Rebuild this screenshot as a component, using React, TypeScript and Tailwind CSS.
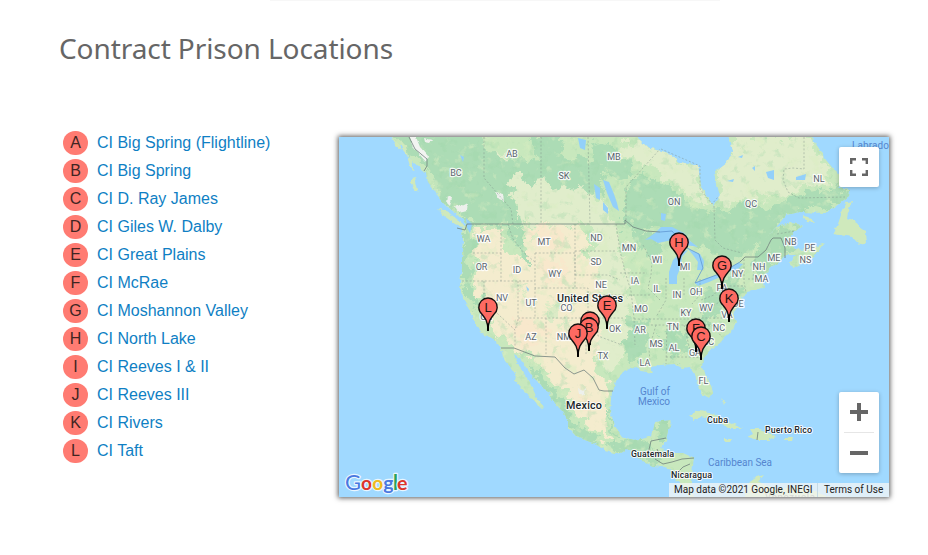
import React from "react";

const locations = [
    "CI Big Spring (Flightline)",
    "CI Big Spring",
    "CI D. Ray James",
    "CI Giles W. Dalby",
    "CI Great Plains",
    "CI McRae",
    "CI Moshannon Valley",
    "CI North Lake",
    "CI Reeves I & II",
    "CI Reeves III",
    "CI Rivers",
    "CI Taft",
];

// x / y is the centre of the pin's head
// A and I share a spot with B and J, so only the top pin is drawn
const pins = [
    { id: "H", x: 679, y: 242 },
    { id: "G", x: 722, y: 265 },
    { id: "K", x: 729, y: 298 },
    { id: "E", x: 607, y: 305 },
    { id: "L", x: 488, y: 307 },
    { id: "D", x: 590, y: 321 },
    { id: "B", x: 589, y: 327 },
    { id: "F", x: 696, y: 328 },
    { id: "J", x: 578, y: 333 },
    { id: "C", x: 701, y: 336 },
];

const states: [string, number, number][] = [
    ["AB", 512, 154], ["BC", 456, 173], ["SK", 564, 176], ["MB", 614, 157], ["ON", 674, 202],
    ["QC", 751, 204], ["NL", 819, 179], ["NB", 790.5, 242], ["PE", 810, 248], ["NS", 805.5, 260],
    ["ME", 774, 258], ["NH", 759, 267], ["MA", 761.5, 279], ["NY", 737.5, 274], ["WA", 483.5, 239],
    ["MT", 544, 242], ["ND", 596.5, 238], ["MN", 629, 248], ["OR", 481.5, 267], ["ID", 517, 270],
    ["WY", 555, 274], ["SD", 596, 262], ["WI", 657, 260], ["MI", 685, 267], ["NE", 601, 285],
    ["IA", 635, 281], ["IL", 657, 289], ["IN", 677, 295], ["OH", 696, 292], ["WV", 706, 308],
    ["KY", 686, 313], ["NV", 502, 298], ["UT", 531, 303], ["CO", 566.5, 308], ["MO", 641, 309],
    ["CA", 486, 317], ["AZ", 531, 337], ["NM", 564, 337], ["OK", 615, 329], ["AR", 640, 330],
    ["TN", 673, 327], ["MS", 656, 344], ["AL", 674, 348], ["GA", 695, 353], ["SC", 708.5, 342],
    ["NC", 719, 328], ["VA", 727, 315], ["PA", 722, 288], ["DE", 738, 304], ["LA", 645, 363],
    ["TX", 603, 356], ["FL", 703.5, 381],
];

const mainland =
    "M388 130L394 141L401 146L407 154L413 162L421 169L426 173L428 182L434 190L438 197L446 206L456 213L464 220L468 224L462 228L463 240L462 252L462 268L460 283L461 292L465 303L470 311L473 320L479 328L482 334L492 338L498 344L501 350L505 361L512 369L516 375L515 381L521 388L529 395L535 403L543 410L542 404L536 396L532 387L527 378L521 369L516 360L514 354L520 358L525 366L532 376L540 384L548 392L554 402L563 412L568 420L568 428L577 437L593 443L605 450L617 454L627 450L634 453L642 461L653 466L664 467L671 470L674 478L681 484L687 493L689 502L698 502L690 489L692 474L694 458L683 453L667 453L661 447L666 440L668 431L672 420L655 422L652 436L642 439L633 440L621 436L615 426L610 413L611 398L613 389L617 379L623 372L633 367L641 370L647 371L653 374L651 367L660 365L675 364L683 368L690 367L695 374L697 384L702 394L709 398L713 392L709 381L702 368L703 358L710 350L720 343L725 337L733 330L736 322L733 315L738 305L743 297L748 292L756 290L764 287L762 278L770 267L780 262L786 255L796 255L790 262L792 268L805 262L818 252L825 243L815 247L802 250L795 248L787 241L793 233L802 226L793 222L777 227L765 238L778 225L786 215L800 212L825 213L835 207L849 196L850 190L838 188L846 178L836 172L826 160L820 150L814 141L812 130L727 130L730 143L732 152L727 163L714 173L720 195L713 206L701 185L698 166L680 162L667 153L647 147L638 138L636 130Z";

const forest = [
    "M388 130H480L478 148L510 160L540 158L550 170L590 172L606 186L600 196L580 190L540 182L514 174L512 200L520 215L522 224L470 224L455 210L440 197L425 170Z",
    "M530 137H562L566 158L596 160L604 178L580 178L552 172L536 160Z",
    "M592 140L620 150L632 170L625 182L606 176L594 160Z",
    "M625 188L640 174L660 178L674 194L700 208L716 214L740 208L770 204L795 196L820 190L845 184L852 192L835 206L800 212L780 222L770 240L745 256L724 258L702 250L690 240L660 226L640 232L625 224Z",
    "M628 228L648 232L662 244L660 258L640 250L628 240Z",
    "M776 230L800 224L798 246L780 262L762 276L750 270L756 250Z",
    "M712 288L738 266L748 278L740 294L722 310L706 328L694 330L704 308Z",
    "M628 318L648 322L648 340L644 360L630 362L626 340Z",
    "M664 330L690 332L690 350L672 362L664 350Z",
    "M461 224H472L472 250L470 285L482 305L490 320L484 322L470 300L461 285Z",
    "M504 226H518L526 246L530 262L522 256L514 244Z",
    "M655 422L672 418L670 440L652 440Z",
    "M528 362L545 380L563 400L572 422L600 440L590 444L570 432L545 392Z",
    "M600 444L640 438L660 452L650 462L625 452Z",
    "M606 404L614 425L624 438L615 434L606 415Z",
];

const pale = [
    "M512 175L530 172L556 178L580 184L598 198L606 214L622 226L620 250L626 275L632 300L626 345L618 366L604 372L592 340L592 224H522L513 205Z",
    "M640 140L665 154L698 166L701 190L712 206L740 202L780 195L800 190L834 182L810 137H730L732 155L716 175L720 196L712 206L690 196L674 186L655 166L625 158L620 140Z",
    "M478 150L492 156L508 152L512 162L500 172L482 166Z",
    "M452 188L470 192L480 202L490 216L478 216L464 208L450 198Z",
];

const desert = [
    "M476 228H500L505 250L520 262L524 236L518 226L560 224L586 228L586 252L600 258L592 275L606 290L598 318L602 340L592 372L610 388L606 410L584 424L572 400L545 372L520 350L505 346L494 330L484 305L474 290L478 270L472 250Z",
    "M560 378L585 376L604 392L600 420L614 442L596 434L578 418Z",
];

const lakes = [
    "M645 240L655 233L661 227L672 227L684 233L690 241L698 247L686 245L672 240L658 243L651 239Z",
    "M669 284L669 272L673 260L680 253L688 250L682 257L681 266L677 276L677 284Z",
    "M688 249L700 254L704 261L703 270L697 270L698 262L693 255Z",
    "M695 283L704 279L717 275L720 277L709 282L698 286Z",
    "M724 272L738 263L743 264L736 271Z",
    "M603 180L609 182L614 194L617 203L619 211L613 207L607 193Z",
    "M594 184L600 188L600 200L596 198Z",
    "M603 202L608 208L608 214L603 210Z",
    "M578 138L586 140L585 150L580 148Z",
    "M661 213L666 214L665 221L661 220Z",
    "M766 172L774 170L774 180L768 178Z",
    "M796 177L806 174L805 180L796 180Z",
    "M466 218L472 224L470 233L467 228Z",
    "M727 181L734 179L733 182ZM738 157L743 155L742 158ZM752 168L755 166L755 171ZM460 155L464 157L463 162ZM517 269L519 272L517 273ZM526 286L529 289L528 292Z",
];

const islands = [
    "M411 178L415 177L418 190L415 192L411 184Z",
    "M438 208L448 212L463 224L466 229L455 224L444 216Z",
    "M391 138L399 144L401 150L396 146Z",
    "M400 140L406 146L408 157L403 150Z",
    "M407 156L412 160L414 171L410 166Z",
    "M833 234L838 224L842 212L847 202L852 201L848 213L847 218L857 222L859 227L866 232L867 243L860 245L852 237Z",
    "M803 216L809 217L815 223L807 222Z",
    "M689 416L697 411L710 412L722 419L737 425L742 428L728 428L715 419L702 416L693 420Z",
    "M750 429L760 429L770 433L777 437L768 440L757 440L747 437L753 434Z",
    "M724 439H732L730 442H724Z",
    "M784 438H793L792 441H784Z",
    "M721 398L725 402L724 405Z",
    "M744 502L747 484L757 477L764 475L758 482L775 489L800 487L830 497V502Z",
];

const borders = [
    "M409 137L415 149L427 159L427 166L424 171",
    "M457 228L465 230L467 224H625V220L633 227L646 231L660 232",
    "M740 262L745 257L758 257L766 250L771 240L773 238H781L785 248L785 258",
    "M501 348L514 348L535 356L555 357L565 368L574 374L584 370L593 378L599 390L604 391L613 391",
    "M648 454L651 441L666 438M655 459L663 464L672 462L682 459L694 458M657 449L660 456M673 477L683 467L690 464M758 432L757 440",
];

const waterBorder = "M660 232L672 231L687 248L699 254L703 268L695 283L719 274L740 262";

const stateLines = [
    "M484 137V178L511 209L513 224M541 137V224M588 137L590 224M626 224V187L660 149",
    "M473 253H501V224M462 281H535M501 253V281M484 281V301L515 330V347M518 281V320L515 330",
    "M508 224L513 239L524 253L535 262M535 253H575V288H535V253M535 288V318M518 318H588V288H575M575 224V275M575 251H616M575 275H608L620 280",
    "M588 295H624M587 318H623M546 318V356M588 318V322H598V336L622 345M586 318V354",
    "M616 224L620 251L626 275L631 291L634 318L635 345M620 273H647M643 245L652 262L651 275L648 288L660 300M629 295H650M666 278V300L656 317M684 278V297M634 319H700M651 325H712M656 325L649 349L650 362M667 325L666 364M684 325L690 350V358M666 357H690L703 358M700 279V295L692 304M701 300L714 295L720 286H743M700 313L716 304L728 297M694 318H734M712 325L722 337M744 259V282L746 292M748 279H760M755 259L753 278",
    "M804 137L804 169L793 168L784 169L783 180L788 192L799 198L845 197M714 206L715 240L723 248L742 253M777 234L795 231",
    "M661 149L700 166L700 189L712 204L718 197",
];

function Pin({ id, x, y }: { id: string; x: number; y: number }) {
    return (
        <g transform={`translate(${x} ${y})`}>
            <path
                d="M0 23C-.5 14-2.5 11.5-6 7.2A9.2 9.2 0 1 1 6 7.2C2.5 11.5 .5 14 0 23Z"
                fill="#fe6a62"
                stroke="#141010"
                strokeWidth="1.4"
            />
            <path d="M0 16.5V24" stroke="#000" strokeWidth="1.9" />
            <text y="4.6" textAnchor="middle" fontSize="13" fill="#241411" className="font-['Liberation_Sans',sans-serif]">
                {id}
            </text>
        </g>
    );
}

function MapCanvas() {
    return (
        <svg viewBox="339 137 550 360" className="block h-full w-full font-[Roboto,sans-serif]">
            <defs>
                <filter id="coast" x="-5%" y="-5%" width="110%" height="110%" colorInterpolationFilters="sRGB">
                    <feTurbulence type="fractalNoise" baseFrequency="0.2" numOctaves="2" seed="3" />
                    <feDisplacementMap in="SourceGraphic" scale="4" xChannelSelector="R" yChannelSelector="G" />
                </filter>
                <filter id="terrain" x="-5%" y="-5%" width="110%" height="110%" colorInterpolationFilters="sRGB">
                    <feTurbulence type="fractalNoise" baseFrequency="0.08" numOctaves="4" seed="8" />
                    <feDisplacementMap in="SourceGraphic" scale="24" xChannelSelector="R" yChannelSelector="G" />
                    <feGaussianBlur stdDeviation="0.5" />
                </filter>
                {/* loose light flecks and darker woods scattered over the land */}
                <filter id="flecks" x="0" y="0" width="100%" height="100%" colorInterpolationFilters="sRGB">
                    <feTurbulence type="fractalNoise" baseFrequency="0.09" numOctaves="3" seed="21" />
                    <feColorMatrix values="0 0 0 0 .85  0 0 0 0 .93  0 0 0 0 .76  6 0 0 0 -3.6" />
                </filter>
                <filter id="woods" x="0" y="0" width="100%" height="100%" colorInterpolationFilters="sRGB">
                    <feTurbulence type="fractalNoise" baseFrequency="0.1" numOctaves="3" seed="5" />
                    <feColorMatrix values="0 0 0 0 .62  0 0 0 0 .84  0 0 0 0 .66  0 6 0 0 -3.5" />
                </filter>
                <clipPath id="land">
                    <path d={mainland} />
                </clipPath>
            </defs>
            <rect x="339" y="137" width="550" height="360" fill="#a0d9ff" />
            <g filter="url(#coast)">
                <path d={mainland} fill="#c8e8bd" />
                <g clipPath="url(#land)">
                    <g filter="url(#terrain)">
                        {pale.map((d) => <path key={d} d={d} fill="#e0edcb" />)}
                        {desert.map((d) => <path key={d} d={d} fill="#f4ecce" />)}
                        <path d="M528 228L556 226L566 240L560 248L540 246ZM540 262L566 260L570 282L545 284ZM510 320L540 322L550 340L526 350ZM578 390L596 398L592 412L582 408Z" fill="#f8e8cc" />
                        {forest.map((d) => <path key={d} d={d} fill="#acdcb5" />)}
                        <path d="M545 305L556 300L560 312L550 318ZM560 325L566 318L570 330ZM520 285L527 292L524 300ZM536 230L542 238L536 244Z" fill="#dcebc6" />
                    </g>
                    <rect x="339" y="137" width="550" height="360" filter="url(#flecks)" opacity=".5" />
                    <rect x="339" y="137" width="550" height="360" filter="url(#woods)" opacity=".32" />
                    <path d="M410 137H416L420 147L428 156L426 162L419 154L413 148Z" fill="#f2f4f1" />
                    <path d="M448 196L452 198L450 206L447 203ZM457 204L462 206L468 203L467 211L459 213L455 208ZM495 192L503 194L504 201L499 199ZM424 138L432 140L430 143L425 142ZM579 389L583 391L586 388L585 395L580 394Z" fill="#edf0ec" />
                </g>
                {islands.map((d) => <path key={d} d={d} fill="#cfe9bc" />)}
            </g>
            <g fill="#93d0fa">
                {lakes.map((d) => <path key={d} d={d} />)}
            </g>
            <path d={waterBorder} fill="none" stroke="#5f97d2" strokeWidth=".8" />
            <g fill="none" stroke="#7c8f88" strokeWidth=".6" strokeDasharray="2 1.8" opacity=".75">
                {stateLines.map((d) => <path key={d} d={d} />)}
            </g>
            <g fill="none" stroke="#70807c" strokeWidth=".8">
                {borders.map((d) => <path key={d} d={d} />)}
            </g>

            <g fontSize="9" fill="#5a646e" stroke="#fff" strokeOpacity=".85" strokeWidth="2.4" strokeLinejoin="round" paintOrder="stroke" textAnchor="middle">
                {states.map(([name, x, y]) => (
                    <text key={name} x={x} y={y + 3.2}>{name}</text>
                ))}
            </g>
            <g fontSize="10" fill="#5586cf">
                <text x="852" y="148.5" textLength="37">Labrado</text>
                <text x="640" y="394.5" textLength="30">Gulf of</text>
                <text x="638" y="404.5" textLength="32">Mexico</text>
                <text x="708" y="465.5" textLength="64">Caribbean Sea</text>
            </g>
            <g fill="#20262a" fontWeight="500" stroke="#fff" strokeOpacity=".85" strokeWidth="2" strokeLinejoin="round" paintOrder="stroke">
                <text x="557" y="301.7" fontSize="10.8" textLength="66">United States</text>
                <text x="566" y="409" fontSize="10.8" textLength="36">Mexico</text>
                <text x="707" y="422.5" fontSize="9" textLength="21">Cuba</text>
                <text x="765" y="432.5" fontSize="9" textLength="47">Puerto Rico</text>
                <text x="631" y="456.5" fontSize="9" textLength="43">Guatemala</text>
                <text x="671" y="477.5" fontSize="9" textLength="41">Nicaragua</text>
            </g>
            <text x="765" y="499.5" fontSize="9.5" fill="#777" textLength="50">Venezuela</text>

            {pins.map((pin) => <Pin key={pin.id} {...pin} />)}

            <g fontWeight="700" stroke="#e9f6ff" strokeWidth="2.4" strokeLinejoin="round" paintOrder="stroke" className="font-[Lato,sans-serif]">
                <text x="345" y="490" fontSize="21" fontWeight="400" fill="#4a78e0" textLength="16" lengthAdjust="spacingAndGlyphs">G</text>
                <text x="361" y="490" fontSize="18.5" fill="#dc352c" textLength="11" lengthAdjust="spacingAndGlyphs">o</text>
                <text x="372.2" y="490" fontSize="18.5" fill="#efbb20" textLength="11" lengthAdjust="spacingAndGlyphs">o</text>
                <text x="383.3" y="490" fontSize="18.5" fill="#4a78e0" textLength="10.5" lengthAdjust="spacingAndGlyphs">g</text>
                <text x="393" y="490" fontSize="20" fill="#2ba25a">l</text>
                <text x="397" y="490" fontSize="18.5" fill="#dc352c" textLength="10.5" lengthAdjust="spacingAndGlyphs">e</text>
            </g>
        </svg>
    );
}

export default function App() {
    return (
        <main className="h-[555px] w-[928px] overflow-hidden bg-white">
            <div className="ml-[270px] h-px w-[450px] bg-[#f7f7f7]"></div>
            <h1 className="mt-[27px] pl-[59px] font-['Noto_Sans',sans-serif] text-[28px] leading-10 tracking-[-0.08px] whitespace-nowrap text-[#666]">
                Contract Prison Locations
            </h1>

            <div className="mt-[61px] flex items-start pl-[63px]">
                <ul className="w-[276px] font-['Liberation_Sans',sans-serif] text-base">
                    {locations.map((name, i) => (
                        <li key={name} className="flex h-7 items-center gap-[9px]">
                            <span className="flex h-6 w-[25px] items-center justify-center rounded-full bg-[#ff7b72] text-[#402522]">
                                {String.fromCharCode(65 + i)}
                            </span>
                            <a href="#" className="text-[#0f7fc4]">{name}</a>
                        </li>
                    ))}
                </ul>

                {/* Map */}
                <div className="relative mt-2 h-[360px] w-[550px] shadow-[0_0_5px_1px_rgba(0,0,0,0.65)]">
                    <MapCanvas />

                    <button className="absolute top-[10px] right-[10px] flex size-10 items-center justify-center rounded-xs bg-white shadow-[0_1px_4px_rgba(0,0,0,0.25)]">
                        <svg viewBox="0 0 18 18" className="size-[18px]" fill="none" stroke="#666" strokeWidth="2.4">
                            <path d="M1.2 6V1.2H6M12 1.2H16.8V6M16.8 12V16.8H12M6 16.8H1.2V12" />
                        </svg>
                    </button>

                    <div className="absolute right-[10px] bottom-6 flex h-[81px] w-10 flex-col items-center rounded-xs bg-white shadow-[0_1px_4px_rgba(0,0,0,0.25)]">
                        <button className="flex h-10 items-center">
                            <svg viewBox="0 0 18 18" className="size-[18px]" fill="none" stroke="#666" strokeWidth="4">
                                <path d="M9 0V18M0 9H18" />
                            </svg>
                        </button>
                        <div className="h-px w-[30px] bg-[#e6e6e6]"></div>
                        <button className="flex h-10 items-center">
                            <svg viewBox="0 0 18 18" className="size-[18px]" fill="none" stroke="#666" strokeWidth="4">
                                <path d="M0 9H18" />
                            </svg>
                        </button>
                    </div>

                    <div className="absolute right-0 bottom-0 flex h-[14px] items-center bg-[#f5f5f5]/75 font-[Roboto,sans-serif] text-[10px] leading-[14px] whitespace-nowrap text-[#222]">
                        <span className="w-[149px] border-r border-[#c5dbe5] pl-[5px]">Map data ©2021 Google, INEGI</span>
                        <span className="w-[71px] pl-[6px]">Terms of Use</span>
                    </div>
                </div>
            </div>
        </main>
    );
}
